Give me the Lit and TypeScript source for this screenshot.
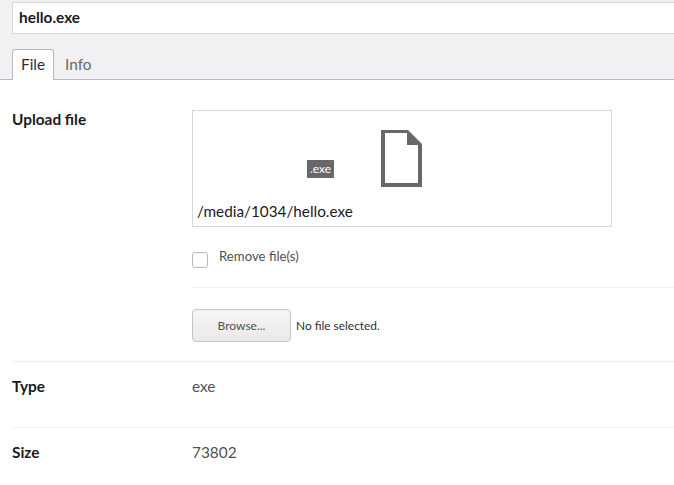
import { LitElement, html, css } from "lit";
import { customElement } from "lit/decorators.js";

@customElement("app-root")
export class AppRoot extends LitElement {
  static styles = css`
    :host { display: block; width: 674px; height: 485px; overflow: hidden; background: #fff; font-family: Lato, sans-serif; color: #515054; font-size: 15.4px; }
    .head { background: #f1f1f3; height: 77px; border-bottom: 1px solid #b9b8c0; padding: 2px 0 0 12px; display: flex; flex-direction: column; }
    .name { height: 32px; box-sizing: border-box; margin-right: -2px; background: #fff; border: 1px solid #d8d7d9; padding: 0 6px; font-weight: 700; font-size: 15.4px; line-height: 29px; color: #1b1a1e; }
    .tabs { display: flex; margin-top: 15px; height: 30px; }
    .tab { padding: 0 0 0 11px; line-height: 30px; font-size: 15.4px; color: #68676b; }
    .tab.on { background: #fff; color: #303033; border: 1px solid #b9b8c0; border-bottom: 0; border-radius: 3px 3px 0 0; height: 31px; box-sizing: border-box; padding: 0 8px; width: 42px; line-height: 29px; }
    .body { padding: 0 0 0 12px; }
    .row { display: grid; grid-template-columns: 180px 1fr; border-bottom: 1px solid #f1f1f3; }
    .label { font-weight: 700; font-size: 15.4px; color: #1b1a1e; line-height: 20px; }
    .upload { padding-top: 30px; height: 251px; }
    .upload .label { margin-top: -1px; }
    .box { width: 420px; height: 117px; box-sizing: border-box; border: 1px solid #d8d7d9; display: flex; flex-direction: column; }
    .preview { height: 85px; display: flex; align-items: flex-start; }
    .ext { margin: 49px 0 0 114px; width: 27px; height: 18px; background: #68676b; color: #fff; font-size: 12px; line-height: 18px; text-align: center; }
    .doc { margin: 19px 0 0 47px; display: block; }
    .path { font-size: 15.3px; color: #1b1a1e; line-height: 20px; padding: 5px 0 0 4px; }
    .remove { display: flex; align-items: center; margin-top: 21px; height: 18px; }
    .cb { width: 16px; height: 16px; box-sizing: border-box; border: 1px solid #bbb9b7; border-radius: 3px; background: #fff; margin-top: 5px; }
    .remove span { margin-left: 11px; font-size: 13.2px; color: #515054; margin-top: -2px; }
    .sep { height: 1px; background: #f1f1f3; margin-top: 21px; }
    .browse { display: flex; align-items: center; margin-top: 21px; }
    .btn { width: 99px; height: 33px; box-sizing: border-box; border: 1px solid #c5c3c0; border-radius: 4px; background: linear-gradient(#f6f5f4, #eceae8); font-size: 12px; line-height: 31px; text-align: center; color: #515054; }
    .none { margin-left: 5px; font-size: 11.9px; color: #303033; }
    .info { height: 66px; box-sizing: border-box; padding-top: 14px; }
    .info.last { border-bottom: 0; }
    .val { font-size: 15.4px; line-height: 20px; color: #515054; }
  `;

  render() {
    return html`
      <div class="head">
        <div class="name">hello.exe</div>
        <div class="tabs">
          <div class="tab on">File</div>
          <div class="tab">Info</div>
        </div>
      </div>
      <div class="body">
        <div class="row upload">
          <div class="label">Upload file</div>
          <div>
            <div class="box">
              <div class="preview">
                <div class="ext">.exe</div>
                <svg class="doc" width="41" height="57" viewBox="0 0 41 57">
                  <path fill="#68676b" d="M0 0H27L41 14V57H0Z" />
                  <path fill="#fff" d="M4 3H26V15H37V53H4Z" />
                </svg>
              </div>
              <div class="path">/media/1034/hello.exe</div>
            </div>
            <div class="remove"><div class="cb"></div><span>Remove file(s)</span></div>
            <div class="sep"></div>
            <div class="browse"><div class="btn">Browse...</div><div class="none">No file selected.</div></div>
          </div>
        </div>
        <div class="row info"><div class="label">Type</div><div class="val">exe</div></div>
        <div class="row info last"><div class="label">Size</div><div class="val">73802</div></div>
      </div>
    `;
  }
}
